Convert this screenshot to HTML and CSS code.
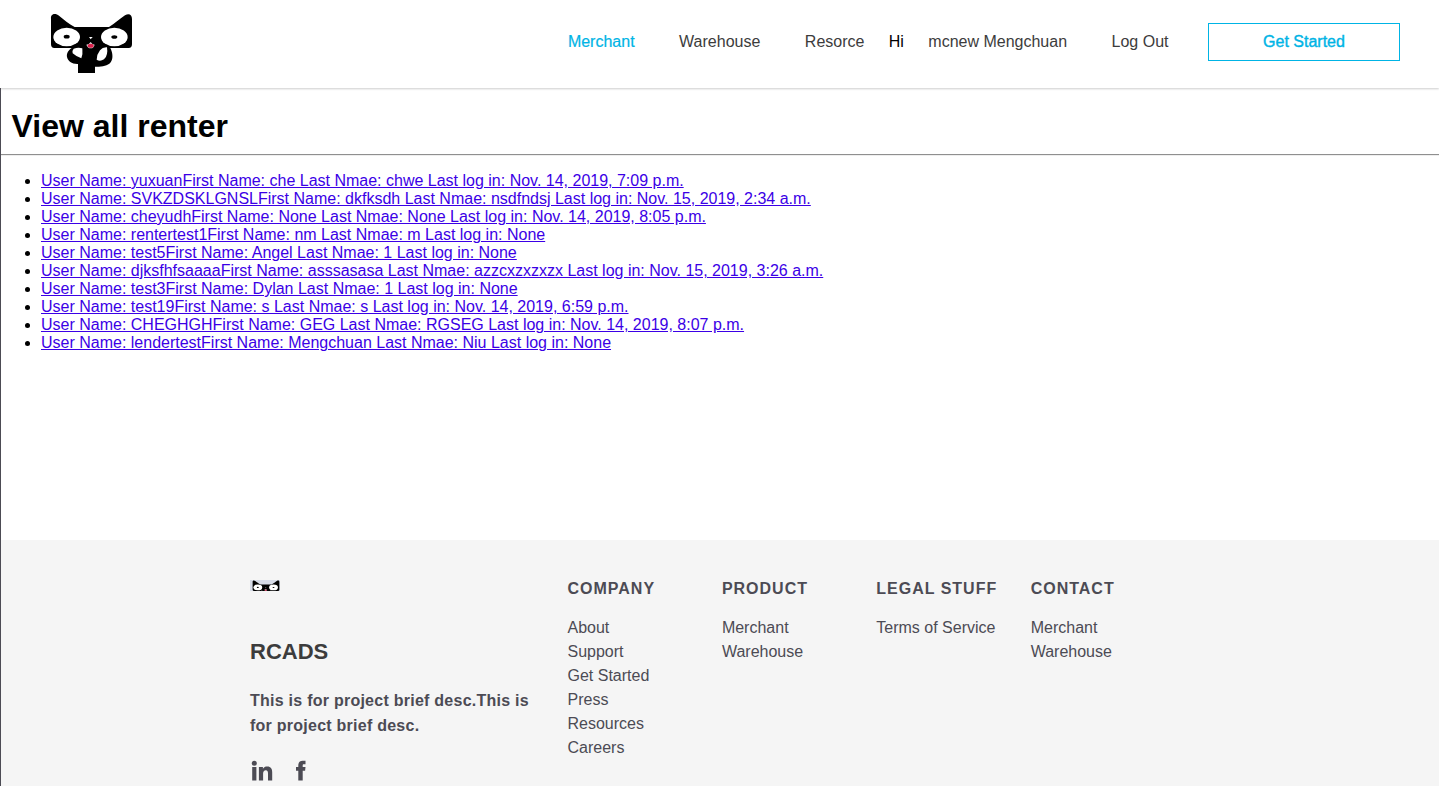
FILE: index.html
```html
<!DOCTYPE html>
<html lang="en">
<head>
<meta charset="utf-8">
<title>View all renter</title>
<link rel="stylesheet" href="styles.css">
</head>
<body>
<svg class="defs" aria-hidden="true">
  <symbol id="cat" viewBox="0 0 315 225">
    <path d="M33 42C31 25 47 24 57 32C72 43 86 57 104 66L207 66C224 57 238 42 255 31C266 24 276 28 276 42V118Q276 129 266 129H211C219 145 220 163 211 173C203 182 184 186 165 185V204H114V177C96 178 84 168 81 156C79 145 86 135 95 129H43Q33 129 33 118Z" fill="#000"/>
    <ellipse cx="80" cy="96" rx="40" ry="28" fill="#fff"/>
    <ellipse cx="223" cy="96" rx="40" ry="28" fill="#fff"/>
    <ellipse cx="80" cy="95" rx="9" ry="5.500" fill="#000"/>
    <ellipse cx="223" cy="96" rx="9" ry="5.500" fill="#000"/>
    <path d="M147 96H158L152 103Z" fill="#fff"/>
    <path d="M139 119Q147 119 152 111Q157 119 164 119Q161 130 152 130Q143 130 139 119Z" fill="#ddd"/>
    <ellipse cx="152" cy="122" rx="9" ry="6" fill="#d9214b"/>
    <path d="M101 131Q115 126 127 130Q129 147 124 160Q109 155 98 145Q96 136 101 131Z" fill="#fff"/>
    <path d="M201 127Q188 126 180 136Q170 149 170 164Q180 171 192 163Q205 152 201 127Z" fill="#fff"/>
  </symbol>
</svg>
<header class="header">
  <a class="logo"><svg width="105" height="75"><use href="#cat"/></svg></a>
  <nav class="nav">
    <a class="nav-link active">Merchant</a>
    <a class="nav-link">Warehouse</a>
    <a class="nav-link">Resorce</a>
    <span class="greeting">Hi</span>
    <a class="nav-link">mcnew Mengchuan</a>
    <a class="nav-link">Log Out</a>
    <a class="get-started">Get Started</a>
  </nav>
</header>
<div class="page">
<main class="content">
  <h1 class="title">View all renter</h1>
  <hr class="rule">
  <ul class="renters">
    <li><a href="#">User Name: yuxuanFirst Name: che Last Nmae: chwe Last log in: Nov. 14, 2019, 7:09 p.m.</a></li>
    <li><a href="#">User Name: SVKZDSKLGNSLFirst Name: dkfksdh Last Nmae: nsdfndsj Last log in: Nov. 15, 2019, 2:34 a.m.</a></li>
    <li><a href="#">User Name: cheyudhFirst Name: None Last Nmae: None Last log in: Nov. 14, 2019, 8:05 p.m.</a></li>
    <li><a href="#">User Name: rentertest1First Name: nm Last Nmae: m Last log in: None</a></li>
    <li><a href="#">User Name: test5First Name: Angel Last Nmae: 1 Last log in: None</a></li>
    <li><a href="#">User Name: djksfhfsaaaaFirst Name: asssasasa Last Nmae: azzcxzxzxzx Last log in: Nov. 15, 2019, 3:26 a.m.</a></li>
    <li><a href="#">User Name: test3First Name: Dylan Last Nmae: 1 Last log in: None</a></li>
    <li><a href="#">User Name: test19First Name: s Last Nmae: s Last log in: Nov. 14, 2019, 6:59 p.m.</a></li>
    <li><a href="#">User Name: CHEGHGHFirst Name: GEG Last Nmae: RGSEG Last log in: Nov. 14, 2019, 8:07 p.m.</a></li>
    <li><a href="#">User Name: lendertestFirst Name: Mengchuan Last Nmae: Niu Last log in: None</a></li>
  </ul>
</main>
<footer class="footer">
  <section class="about">
    <svg class="mini-logo" width="30" height="11" viewBox="0 0 30 11">
      <rect width="30" height="11" fill="#d6dbe7"/>
      <g transform="translate(-1 -2.400) scale(.11 .103)"><use href="#cat" width="315" height="225"/></g>
    </svg>
    <h2 class="brand">RCADS</h2>
    <p class="desc">This is for project brief desc.This is for project brief desc.</p>
    <div class="social">
      <svg width="24" height="24" viewBox="0 0 24 24" fill="#4c4b54">
        <circle cx="4.300" cy="3.300" r="2.500"/>
        <path d="M2.200 7H6.400V20.500H2.200ZM8.900 7H12.900V8.800C14 7.100 15.300 6.600 17.200 6.600C21 6.600 22.200 9 22.200 12.500V20.500H18V13.400C18 11.500 17.600 10.200 15.800 10.200C14 10.200 13.100 11.500 13.100 13.400V20.500H8.900Z"/>
      </svg>
      <svg width="24" height="24" viewBox="0 0 24 24" fill="#4c4b54">
        <path d="M9.300 20.500V10.800H7V7H9.300V5.600C9.300 2.400 10.900 .8 13.600 .8H16.500V4.300H14.900C13.900 4.300 13.700 4.800 13.700 5.600V7H16.500L16.100 10.800H13.700V20.500Z"/>
      </svg>
    </div>
  </section>
  <section class="column"><h3>COMPANY</h3><a>About</a><a>Support</a><a>Get Started</a><a>Press</a><a>Resources</a><a>Careers</a></section>
  <section class="column"><h3>PRODUCT</h3><a>Merchant</a><a>Warehouse</a></section>
  <section class="column"><h3>LEGAL STUFF</h3><a>Terms of Service</a></section>
  <section class="column"><h3>CONTACT</h3><a>Merchant</a><a>Warehouse</a></section>
</footer>
</div>
</body>
</html>
```
FILE: styles.css
```css
* { box-sizing: border-box; }
body {
  margin: 0;
  height: 786px;
  overflow: hidden;
  display: flex;
  flex-direction: column;
  background: #fff;
  color: #000;
  font: 16px/18px "Liberation Sans", Arial, sans-serif;
}
svg { display: block; }
.defs { display: none; }
.header {
  flex: none;
  height: 88px;
  padding: 0 39px 0 40px;
  display: flex;
  justify-content: space-between;
  box-shadow: 0 1px 2px rgba(0, 0, 0, 0.2);
}
.logo { padding-top: 5px; }
.nav {
  display: flex;
  align-items: center;
  height: 84px;
  white-space: nowrap;
}
.nav-link { color: #3c3c3c; margin-left: 44.500px; }
.nav-link.active { color: #00b4e5; -webkit-text-stroke: 0.200px #00b4e5; }
.greeting { margin: 0 -20px 0 24.300px; }
.get-started {
  width: 192px;
  height: 38px;
  margin-left: 39.500px;
  border: 1px solid #00b4e5;
  color: #00b4e5;
  line-height: 36px;
  text-align: center;
  -webkit-text-stroke: 0.400px #00b4e5;
}
.page {
  flex: 1;
  display: flex;
  flex-direction: column;
  border-left: 1px solid #4c4b54;
  min-height: 0;
}
.content { flex: none; height: 452px; }
.title {
  margin: 0;
  padding: 20px 0 0 10.500px;
  font-size: 32px;
  line-height: 36px;
}
.rule {
  margin: 10px 0 16px;
  border: 0;
  border-top: 1px solid #8f8f8f;
  border-bottom: 1px solid #eee;
}
.renters { margin: 0; padding-left: 40px; }
.renters a { color: #3b00e6; }
.footer {
  flex: 1;
  display: flex;
  background: #f5f5f5;
  color: #4c4b54;
  padding: 40px 0 0 249px;
}
.about { width: 317.500px; }
.brand {
  margin: 48px 0 0;
  color: #3c3c3c;
  font-size: 22px;
  line-height: 26px;
}
.desc {
  width: 290px;
  margin: 23px 0 0;
  font-weight: bold;
  line-height: 25px;
  letter-spacing: 0.250px;
}
.social { display: flex; gap: 15px; margin-top: 22px; }
.column {
  width: 154.400px;
  display: flex;
  flex-direction: column;
  line-height: 24px;
  white-space: nowrap;
}
.column h3 {
  margin: 0 0 18px;
  font-size: 16px;
  line-height: 18px;
  letter-spacing: 1px;
}
```
